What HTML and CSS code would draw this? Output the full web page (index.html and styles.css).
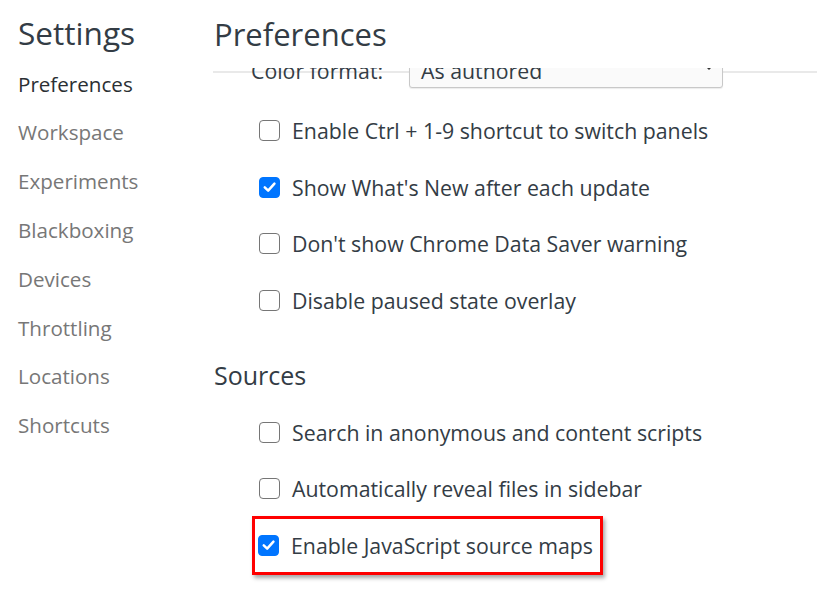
FILE: index.html
```html
<!DOCTYPE html>
<html>
<head>
<meta charset="utf-8">
<link rel="stylesheet" href="styles.css">
</head>
<body>
<div class="app">
  <nav class="sidebar">
    <div class="sidebar-title">Settings</div>
    <ul class="tabs">
      <li class="tab selected">Preferences</li>
      <li class="tab">Workspace</li>
      <li class="tab">Experiments</li>
      <li class="tab">Blackboxing</li>
      <li class="tab">Devices</li>
      <li class="tab">Throttling</li>
      <li class="tab">Locations</li>
      <li class="tab">Shortcuts</li>
    </ul>
  </nav>
  <main class="main">
    <header class="main-title">Preferences</header>
    <div class="scroll">
      <div class="color-row">
        <span class="field-label">Color format:</span>
        <div class="select"><span>As authored</span><span class="arrow"></span></div>
      </div>
      <div class="options">
        <div class="row"><label class="item"><span class="box"></span><span class="text">Enable Ctrl + 1-9 shortcut to switch panels</span></label></div>
        <div class="row"><label class="item"><span class="box checked"><svg viewBox="0 0 20 20" width="20" height="20"><path d="M5 10.3 L8.6 13.8 L15.2 6.4" fill="none" stroke="#fff" stroke-width="2.6" stroke-linecap="round" stroke-linejoin="round"/></svg></span><span class="text">Show What's New after each update</span></label></div>
        <div class="row"><label class="item"><span class="box"></span><span class="text">Don't show Chrome Data Saver warning</span></label></div>
        <div class="row"><label class="item"><span class="box"></span><span class="text">Disable paused state overlay</span></label></div>
      </div>
      <h2 class="section-title">Sources</h2>
      <div class="options">
        <div class="row"><label class="item"><span class="box"></span><span class="text">Search in anonymous and content scripts</span></label></div>
        <div class="row"><label class="item"><span class="box"></span><span class="text">Automatically reveal files in sidebar</span></label></div>
        <div class="row"><label class="item marked"><span class="box checked"><svg viewBox="0 0 20 20" width="20" height="20"><path d="M5 10.3 L8.6 13.8 L15.2 6.4" fill="none" stroke="#fff" stroke-width="2.6" stroke-linecap="round" stroke-linejoin="round"/></svg></span><span class="text">Enable JavaScript source maps</span></label></div>
      </div>
    </div>
  </main>
</div>
</body>
</html>
```
FILE: styles.css
```css
* { box-sizing: border-box; }
html, body { margin: 0; padding: 0; background: #fff; }
body {
  font-family: "Open Sans", "Noto Sans", sans-serif;
  color: #333c45;
  width: 817px;
  height: 589px;
  overflow: hidden;
}
.app { display: flex; height: 589px; }
.sidebar { width: 213px; flex: none; padding-left: 18px; }
.sidebar-title {
  font-size: 31.6px;
  line-height: 50px;
  padding-top: 8px;
  color: #333c45;
}
.tabs { list-style: none; margin: 1.6px 0 0; padding: 0; }
.tab {
  font-size: 20.6px;
  height: 48.8px;
  line-height: 48.8px;
  color: #777;
  white-space: nowrap;
}
.tab.selected { color: #2b2f33; }
.main { flex: 1; display: flex; flex-direction: column; min-width: 0; }
.main-title {
  height: 68px;
  flex: none;
  font-size: 31px;
  line-height: 50px;
  padding-top: 9px;
  padding-left: 1px;
  color: #333c45;
}
.scroll { flex: 1; overflow: hidden; }
.color-row {
  display: flex;
  align-items: center;
  height: 36px;
  margin-top: -16px;
  padding-left: 38px;
  background: linear-gradient(to bottom, transparent 19px, #e9e9e9 19px, #e9e9e9 21px, transparent 21px);
}
.field-label { font-size: 21.3px; width: 158px; flex: none; white-space: nowrap; }
.select {
  width: 314px;
  height: 36px;
  border: 1.5px solid #c8c8c8;
  border-radius: 3px;
  background: #fafafa;
  display: flex;
  align-items: center;
  justify-content: space-between;
  padding: 0 10px 0 11px;
  font-size: 21.3px;
  box-shadow: 0 1px 1px rgba(0,0,0,0.08);
}
.arrow {
  width: 0; height: 0;
  border-left: 3px solid transparent;
  border-right: 3px solid transparent;
  border-top: 3px solid #333;
  margin-top: -4px;
}
.options { padding-left: 46px; }
.color-row + .options { padding-top: 14px; }
.row {
  height: 56.7px;
  display: flex;
  align-items: center;
}
.item { display: inline-flex; align-items: center; }
.box {
  width: 21px;
  height: 21px;
  border: 1.5px solid #767676;
  border-radius: 4px;
  background: #fff;
  flex: none;
  display: flex;
  align-items: center;
  justify-content: center;
}
.box.checked { background: #0075ff; border-color: #0075ff; }
.box svg { display: block; }
.text { font-size: 21.3px; margin-left: 12px; white-space: nowrap; }
.section-title {
  font-weight: normal;
  font-size: 25px;
  line-height: 32px;
  margin: 30px 0 13px;
  padding-left: 1px;
}
.marked {
  border: 3px solid #ff0000;
  height: 59px;
  margin-left: -7px;
  padding: 0 7px 0 3px;
  box-shadow: 2px 3px 4px rgba(0,0,0,0.35);
}
```
